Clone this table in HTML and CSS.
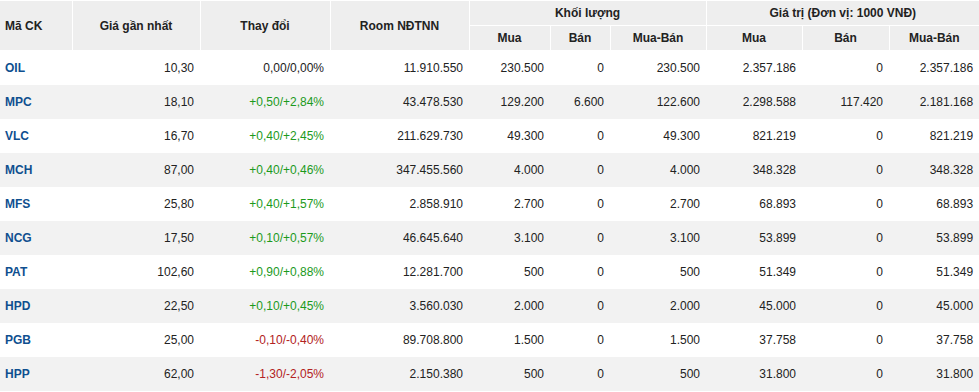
FILE: index.html
```html
<!DOCTYPE html>
<html lang="vi">
<head>
    <meta charset="UTF-8">
    <title>Giao dịch NĐTNN</title>
    <link rel="stylesheet" href="styles.css">
</head>
<body>
    <table class="foreign-table">
        <colgroup>
            <col style="width:72px">
            <col style="width:128px">
            <col style="width:130px">
            <col style="width:139px">
            <col style="width:81px">
            <col style="width:60px">
            <col style="width:96px">
            <col style="width:96px">
            <col style="width:87px">
            <col style="width:90px">
        </colgroup>
        <thead>
            <tr class="head-top">
                <th rowspan="2" class="left">Mã CK</th>
                <th rowspan="2">Giá gần nhất</th>
                <th rowspan="2">Thay đổi</th>
                <th rowspan="2">Room NĐTNN</th>
                <th colspan="3">Khối lượng</th>
                <th colspan="3">Giá trị (Đơn vị: 1000 VNĐ)</th>
            </tr>
            <tr class="head-sub">
                <th>Mua</th>
                <th>Bán</th>
                <th>Mua-Bán</th>
                <th>Mua</th>
                <th>Bán</th>
                <th>Mua-Bán</th>
            </tr>
        </thead>
        <tbody>
            <tr>
                <td class="sym">OIL</td><td>10,30</td><td>0,00/0,00%</td><td>11.910.550</td>
                <td>230.500</td><td>0</td><td>230.500</td><td>2.357.186</td><td>0</td><td>2.357.186</td>
            </tr>
            <tr>
                <td class="sym">MPC</td><td>18,10</td><td class="up">+0,50/+2,84%</td><td>43.478.530</td>
                <td>129.200</td><td>6.600</td><td>122.600</td><td>2.298.588</td><td>117.420</td><td>2.181.168</td>
            </tr>
            <tr>
                <td class="sym">VLC</td><td>16,70</td><td class="up">+0,40/+2,45%</td><td>211.629.730</td>
                <td>49.300</td><td>0</td><td>49.300</td><td>821.219</td><td>0</td><td>821.219</td>
            </tr>
            <tr>
                <td class="sym">MCH</td><td>87,00</td><td class="up">+0,40/+0,46%</td><td>347.455.560</td>
                <td>4.000</td><td>0</td><td>4.000</td><td>348.328</td><td>0</td><td>348.328</td>
            </tr>
            <tr>
                <td class="sym">MFS</td><td>25,80</td><td class="up">+0,40/+1,57%</td><td>2.858.910</td>
                <td>2.700</td><td>0</td><td>2.700</td><td>68.893</td><td>0</td><td>68.893</td>
            </tr>
            <tr>
                <td class="sym">NCG</td><td>17,50</td><td class="up">+0,10/+0,57%</td><td>46.645.640</td>
                <td>3.100</td><td>0</td><td>3.100</td><td>53.899</td><td>0</td><td>53.899</td>
            </tr>
            <tr>
                <td class="sym">PAT</td><td>102,60</td><td class="up">+0,90/+0,88%</td><td>12.281.700</td>
                <td>500</td><td>0</td><td>500</td><td>51.349</td><td>0</td><td>51.349</td>
            </tr>
            <tr>
                <td class="sym">HPD</td><td>22,50</td><td class="up">+0,10/+0,45%</td><td>3.560.030</td>
                <td>2.000</td><td>0</td><td>2.000</td><td>45.000</td><td>0</td><td>45.000</td>
            </tr>
            <tr>
                <td class="sym">PGB</td><td>25,00</td><td class="down">-0,10/-0,40%</td><td>89.708.800</td>
                <td>1.500</td><td>0</td><td>1.500</td><td>37.758</td><td>0</td><td>37.758</td>
            </tr>
            <tr>
                <td class="sym">HPP</td><td>62,00</td><td class="down">-1,30/-2,05%</td><td>2.150.380</td>
                <td>500</td><td>0</td><td>500</td><td>31.800</td><td>0</td><td>31.800</td>
            </tr>
        </tbody>
    </table>
</body>
</html>
```
FILE: styles.css
```css
* {
    margin: 0;
    padding: 0;
    box-sizing: border-box;
}

body {
    background: #fff;
    font-family: 'Liberation Sans', Arial, sans-serif;
    font-size: 12px;
    color: #222;
}

.foreign-table {
    width: 979px;
    table-layout: fixed;
    border-collapse: collapse;
}

/* Header */
.foreign-table th {
    background: #eeeeee;
    border: 1px solid #fff;
    font-weight: bold;
    text-align: center;
    vertical-align: middle;
    color: #222;
    height: 25px;
    white-space: nowrap;
}

.foreign-table th.left {
    text-align: left;
    padding-left: 5px;
}

.foreign-table thead tr:first-child th:first-child {
    border-left: none;
}

.foreign-table thead tr th:last-child {
    border-right: none;
}

/* Body */
.foreign-table td {
    height: 34px;
    text-align: right;
    padding-right: 6px;
    vertical-align: middle;
    white-space: nowrap;
}

.foreign-table tbody tr:nth-child(even) td {
    background: #f2f2f2;
}

.foreign-table td.sym {
    text-align: left;
    padding-left: 5px;
    font-weight: bold;
    color: #0f4f8f;
}

.up { color: #1c9a1c; }
.down { color: #b22222; }
```
